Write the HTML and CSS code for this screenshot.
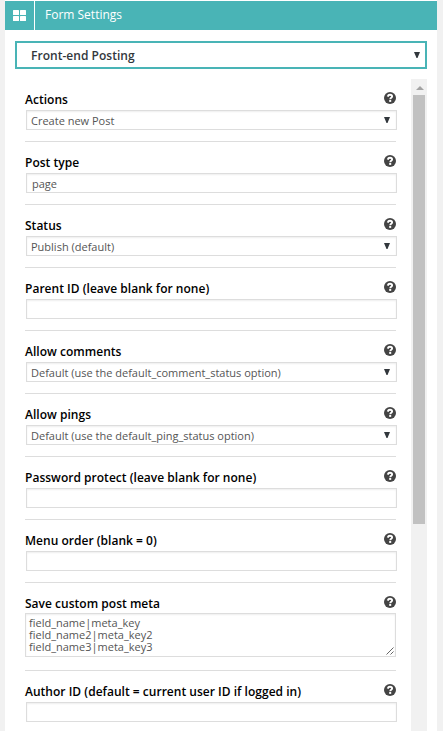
FILE: index.html
```
<!DOCTYPE html>
<html lang="en">
<head>
<meta charset="utf-8">
<title>Form Settings</title>
<link rel="stylesheet" href="styles.css">
</head>
<body>
<svg width="0" height="0" class="defs">
  <symbol id="help" viewBox="0 0 12 12">
    <circle cx="6" cy="6" r="6" fill="#444"/>
    <path d="M3.7 4.6C4.1 3.3 4.9 2.8 6 2.8c1.3 0 2.1.7 2.1 1.7 0 1.3-1.8 1.3-1.8 2.7" fill="none" stroke="#fff" stroke-width="1.9"/>
    <rect x="5.2" y="8" width="2" height="1.9" fill="#fff"/>
  </symbol>
  <symbol id="arrow" viewBox="0 0 6 6">
    <path d="M0 0h6L3.5 6h-1z" fill="#32373c"/>
  </symbol>
</svg>
<main class="panel">
  <header class="header">
    <div class="header-icon">
      <svg width="13" height="11" viewBox="0 0 13 11" fill="#fff"><rect width="6" height="5" rx=".5"/><rect x="7" width="6" height="5" rx=".5"/><rect y="6" width="6" height="5" rx=".5"/><rect x="7" y="6" width="6" height="5" rx=".5"/></svg>
    </div>
    <h1 class="title">Form Settings</h1>
  </header>
  <div class="section-select"><span>Front-end Posting</span><svg class="arrow"><use href="#arrow"/></svg></div>
  <div class="scroller">
    <div class="fields">
      <section class="field">
        <div class="label"><span>Actions</span><svg class="help"><use href="#help"/></svg></div>
        <div class="control"><span>Create new Post</span><svg class="arrow"><use href="#arrow"/></svg></div>
      </section>
      <section class="field">
        <div class="label"><span>Post type</span><svg class="help"><use href="#help"/></svg></div>
        <div class="control input"><span>page</span></div>
      </section>
      <section class="field">
        <div class="label"><span>Status</span><svg class="help"><use href="#help"/></svg></div>
        <div class="control"><span>Publish (default)</span><svg class="arrow"><use href="#arrow"/></svg></div>
      </section>
      <section class="field">
        <div class="label"><span>Parent ID (leave blank for none)</span><svg class="help"><use href="#help"/></svg></div>
        <div class="control input"></div>
      </section>
      <section class="field">
        <div class="label"><span>Allow comments</span><svg class="help"><use href="#help"/></svg></div>
        <div class="control"><span>Default (use the default_comment_status option)</span><svg class="arrow"><use href="#arrow"/></svg></div>
      </section>
      <section class="field">
        <div class="label"><span>Allow pings</span><svg class="help"><use href="#help"/></svg></div>
        <div class="control"><span>Default (use the default_ping_status option)</span><svg class="arrow"><use href="#arrow"/></svg></div>
      </section>
      <section class="field">
        <div class="label"><span>Password protect (leave blank for none)</span><svg class="help"><use href="#help"/></svg></div>
        <div class="control input"></div>
      </section>
      <section class="field">
        <div class="label"><span>Menu order (blank = 0)</span><svg class="help"><use href="#help"/></svg></div>
        <div class="control input"></div>
      </section>
      <section class="field field-area">
        <div class="label"><span>Save custom post meta</span><svg class="help"><use href="#help"/></svg></div>
        <div class="area"><div>field_name|meta_key<br>field_name2|meta_key2<br>field_name3|meta_key3</div><svg class="grip" viewBox="0 0 8 8"><path d="M.5 7.5l7-7M4.5 7.5l3-3" stroke="#555" stroke-width=".9"/></svg></div>
      </section>
      <section class="field">
        <div class="label"><span>Author ID (default = current user ID if logged in)</span><svg class="help"><use href="#help"/></svg></div>
        <div class="control input"></div>
      </section>
    </div>
    <div class="track">
      <svg class="up" viewBox="0 0 8 4"><path d="M4 0l4 4H0z" fill="#a3a3a3"/></svg>
      <div class="thumb"></div>
    </div>
  </div>
</main>
</body>
</html>
```
FILE: styles.css
```
* { box-sizing: border-box; }
body {
  margin: 0;
  height: 731px;
  overflow: hidden;
  background: #f1f1f1;
  font-family: "Open Sans", sans-serif;
  font-size: 11px;
  color: #555;
}
svg { display: block; flex: none; }
.defs { display: none; }
.panel {
  display: flex;
  flex-direction: column;
  width: 432px;
  height: 731px;
  margin-left: 5px;
  padding-top: 1px;
  background: #fff;
}
.header { display: flex; flex: none; height: 29px; background: #49b4b6; }
.header-icon {
  display: flex;
  align-items: center;
  justify-content: center;
  width: 30px;
  border-right: 1px solid #fff;
}
.title {
  margin: 0 0 0 10px;
  font-size: 12px;
  font-weight: 400;
  line-height: 28px;
  color: #fff;
}
.section-select {
  display: flex;
  flex: none;
  justify-content: space-between;
  height: 28px;
  margin: 11px 10px 10px;
  padding: 0 5px 0 14px;
  border: 2px solid #49b4b6;
  font-size: 12px;
  font-weight: 600;
  line-height: 25px;
  letter-spacing: .03px;
  color: #32373c;
}
.arrow { width: 6px; height: 6px; margin-top: 9px; }
.scroller { display: flex; flex: 1; min-height: 0; margin-right: 10px; overflow: hidden; }
.fields { width: 371px; margin: 0 15px 0 20px; }
.field { height: 63px; border-bottom: 1px solid #ddd; }
.label {
  display: flex;
  justify-content: space-between;
  height: 31px;
  padding-top: 13px;
  font-size: 12px;
  font-weight: 600;
  line-height: 16px;
  letter-spacing: .02px;
  color: #000;
  white-space: nowrap;
}
.help { width: 12px; height: 12px; }
.control {
  display: flex;
  justify-content: space-between;
  width: 371px;
  height: 20px;
  margin-left: 1px;
  padding: 0 6px 0 4px;
  border: 1px solid #ddd;
  box-shadow: inset 0 1px 2px rgba(0, 0, 0, .07);
  line-height: 20px;
  white-space: nowrap;
}
.control .arrow { margin-top: 6px; }
.input { padding-left: 5px; }
.field-area { height: 88px; }
.field-area .label { height: 30px; }
.area {
  display: flex;
  justify-content: space-between;
  height: 44px;
  padding: 3px 1px 1px 3px;
  border: 1px solid #ddd;
  box-shadow: inset 0 1px 2px rgba(0, 0, 0, .07);
  line-height: 12px;
}
.grip { align-self: flex-end; width: 8px; height: 8px; }
.track { width: 16px; background: #f1f1f1; }
.up { width: 8px; height: 4px; margin: 7px 0 5px 5px; }
.thumb { width: 12px; height: 429px; margin-left: 2px; background: #c1c1c1; }
```
